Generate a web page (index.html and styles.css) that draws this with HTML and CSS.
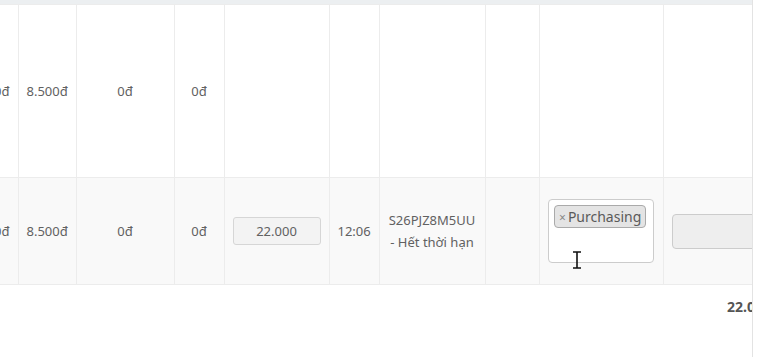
FILE: index.html
```html
<!DOCTYPE html>
<html lang="vi">
<head>
<meta charset="utf-8">
<link rel="stylesheet" href="styles.css">
</head>
<body>
<div class="scroller">
  <table class="grid">
    <colgroup>
      <col class="c-a"><col class="c-b"><col class="c-c"><col class="c-d"><col class="c-e">
      <col class="c-f"><col class="c-g"><col class="c-h"><col class="c-i"><col class="c-j">
    </colgroup>
    <thead>
      <tr class="head"><th></th><th></th><th></th><th></th><th></th><th></th><th></th><th></th><th></th><th></th></tr>
    </thead>
    <tbody>
      <tr class="row1">
        <td class="right">8.500đ</td>
        <td>8.500đ</td>
        <td class="center">0đ</td>
        <td class="center">0đ</td>
        <td></td>
        <td></td>
        <td></td>
        <td></td>
        <td></td>
        <td></td>
      </tr>
      <tr class="row2">
        <td class="right">8.500đ</td>
        <td>8.500đ</td>
        <td class="center">0đ</td>
        <td class="center">0đ</td>
        <td class="center"><div class="amount">22.000</div></td>
        <td>12:06</td>
        <td class="center code">S26PJZ8M5UU<br>- Hết thời hạn</td>
        <td></td>
        <td class="center">
          <div class="multi">
            <span class="tag"><span class="x">×</span>Purchasing</span>
            <svg class="ibeam" width="10" height="18" viewBox="0 0 10 18"><path d="M1 1h8M5 1v16M1 17h8" stroke="#111" stroke-width="1.6" fill="none"/></svg>
          </div>
        </td>
        <td><div class="note"></div></td>
      </tr>
    </tbody>
    <tfoot>
      <tr class="foot"><td colspan="9"></td><td class="total">22.000đ</td></tr>
    </tfoot>
  </table>
</div>
</body>
</html>
```
FILE: styles.css
```css
html, body {
  margin: 0;
  padding: 0;
  background: #ffffff;
}
body {
  font-family: "Source Sans Pro", "Noto Sans", "Open Sans", sans-serif;
  font-size: 13px;
  color: #616161;
}
.scroller {
  width: 752px;
  height: 357px;
  overflow: hidden;
  border-right: 1px solid #e3e3e3;
  box-sizing: content-box;
}
.grid {
  border-collapse: collapse;
  table-layout: fixed;
  width: 860px;
  margin-left: -53px;
}
.c-a { width: 71px; }
.c-b { width: 58px; }
.c-c { width: 98px; }
.c-d { width: 50px; }
.c-e { width: 105px; }
.c-f { width: 50px; }
.c-g { width: 106px; }
.c-h { width: 54px; }
.c-i { width: 124px; }
.c-j { width: 144px; }

.head th {
  height: 4px;
  padding: 0;
  background: #eceff1;
  border: 0;
}
tbody td {
  border: 1px solid #ececec;
  padding: 0 8px;
  vertical-align: middle;
  white-space: nowrap;
  overflow: hidden;
}
tbody tr td:first-child { border-left: 0; }
.row1 td { height: 172px; background: #ffffff; }
.row2 td { height: 106px; background: #f9f9f9; }
.center { text-align: center; }
.right { text-align: right; }
.code { line-height: 22px; }

.amount {
  width: 86px;
  height: 26px;
  margin: 0 auto;
  border: 1px solid #d6d6d6;
  border-radius: 3px;
  background: #f3f3f3;
  line-height: 26px;
  text-align: center;
  box-sizing: content-box;
}
.multi {
  position: relative;
  width: 106px;
  height: 64px;
  margin: 0 auto;
  border: 1px solid #cccccc;
  border-radius: 4px;
  background: #ffffff;
  text-align: left;
  padding: 5px 5px;
  box-sizing: border-box;
}
.tag {
  display: inline-block;
  background: #e4e4e4;
  border: 1px solid #aaaaaa;
  border-radius: 4px;
  padding: 0 4px 0 4px;
  height: 23px;
  line-height: 21px;
  font-size: 14px;
  color: #5a5a5a;
  box-sizing: border-box;
}
.tag .x {
  color: #888888;
  font-size: 12px;
  margin-right: 2px;
}
.ibeam {
  position: absolute;
  left: 23px;
  top: 51px;
}
.note {
  width: 100px;
  height: 35px;
  margin-left: 0;
  border: 1px solid #cccccc;
  border-radius: 4px;
  background: #eeeeee;
  box-sizing: border-box;
}
.foot td {
  height: 42px;
  padding: 0;
  border: 0;
  background: #ffffff;
}
.foot .total {
  padding-left: 64px;
  font-size: 14px;
  font-weight: bold;
  color: #555555;
  white-space: nowrap;
  vertical-align: middle;
}
```
